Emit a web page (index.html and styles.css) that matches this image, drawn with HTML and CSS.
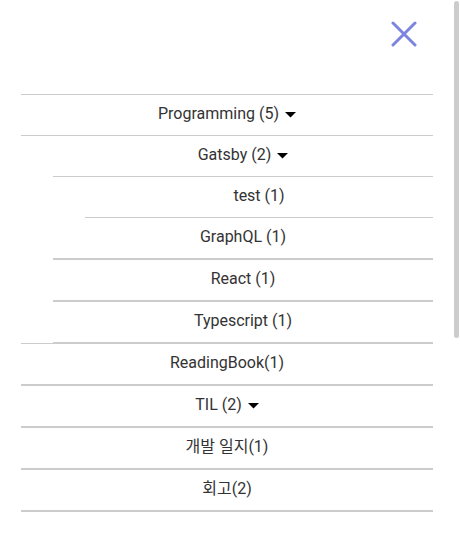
FILE: index.html
```html
<!DOCTYPE html>
<html lang="ko">
<head>
<meta charset="utf-8">
<title>Menu</title>
<link rel="stylesheet" href="styles.css">
</head>
<body>
<div class="drawer">
  <header class="header">
    <button class="close" aria-label="close">
      <svg width="26" height="26" viewBox="0 0 26 26"><path d="M2 2L24 24M24 2L2 24" stroke="#7c84e0" stroke-width="3" stroke-linecap="round" fill="none"/></svg>
    </button>
  </header>
  <ul class="menu">
    <li class="group">
      <div class="row">Programming (5)<svg class="caret" width="17" height="24" viewBox="0 0 17 24"><path d="M6 10l5.5 5.5 5.5-5.5z"/></svg></div>
      <ul class="sub">
        <li>
          <div class="row">Gatsby (2)<svg class="caret" width="17" height="24" viewBox="0 0 17 24"><path d="M6 10l5.5 5.5 5.5-5.5z"/></svg></div>
          <ul class="sub">
            <li><div class="row">test (1)</div></li>
          </ul>
        </li>
        <li><div class="row thick">GraphQL (1)</div></li>
        <li><div class="row thick">React (1)</div></li>
        <li><div class="row">Typescript (1)</div></li>
      </ul>
    </li>
    <li><div class="row thick">ReadingBook(1)</div></li>
    <li><div class="row thick">TIL (2)<svg class="caret" width="17" height="24" viewBox="0 0 17 24"><path d="M6 10l5.5 5.5 5.5-5.5z"/></svg></div></li>
    <li><div class="row thick">개발 일지(1)</div></li>
    <li><div class="row thick">회고(2)</div></li>
  </ul>
</div>
<div class="scroll-thumb"></div>
</body>
</html>
```
FILE: styles.css
```css
body {
  margin: 0;
  background: #fff;
  font-family: Roboto, "Noto Sans CJK KR", sans-serif;
  color: #333;
}
.drawer {
  padding: 0 27px 0 21px;
  box-sizing: border-box;
}
.header {
  height: 94px;
  box-sizing: border-box;
  padding-top: 14px;
  display: flex;
  justify-content: flex-end;
  align-items: flex-start;
}
.close {
  width: 40px;
  height: 40px;
  margin-right: 9px;
  padding: 0;
  border: 0;
  background: none;
  display: flex;
  align-items: center;
  justify-content: center;
}
.menu, .sub {
  list-style: none;
  margin: 0;
  padding: 0;
}
.menu {
  border-top: 1px solid #ccc;
}
.sub {
  margin-left: 32px;
}
.group {
  border-bottom: 1px solid #ccc;
}
.row {
  height: 41px;
  box-sizing: border-box;
  border-bottom: 1px solid #ccc;
  padding-bottom: 3px;
  display: flex;
  align-items: center;
  justify-content: center;
  font-size: 16px;
  line-height: 19px;
}
.row.thick {
  height: 42px;
  border-bottom-width: 2px;
}
.caret {
  display: block;
  fill: #000;
}
.scroll-thumb {
  position: fixed;
  top: 1px;
  right: 1px;
  width: 5px;
  height: 337px;
  border-radius: 3px;
  background: #ccc;
}
```
